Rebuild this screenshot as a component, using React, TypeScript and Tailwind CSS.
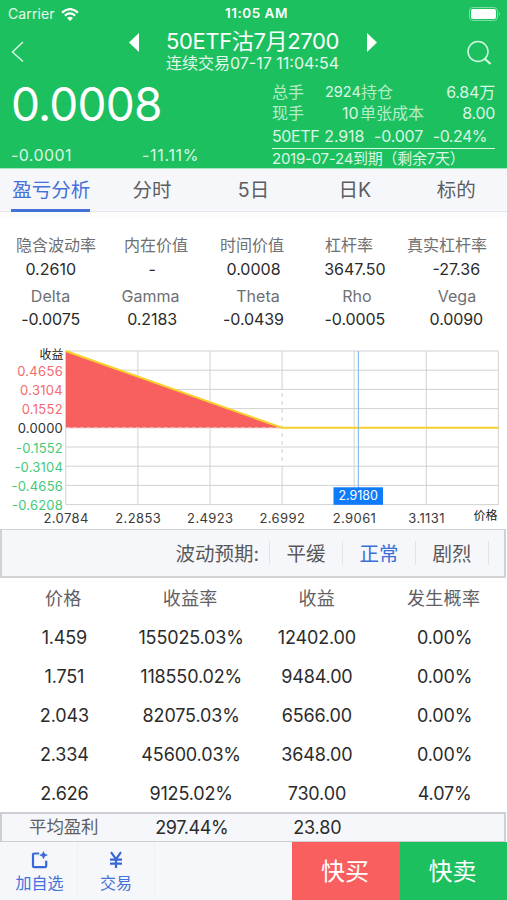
import type { ReactNode } from "react";

type Metric = {
  label: string;
  value: string;
};

const TABS = ["盈亏分析", "分时", "5日", "日K", "标的"];

const METRICS: Metric[] = [
  { label: "隐含波动率", value: "0.2610" },
  { label: "内在价值", value: "-" },
  { label: "时间价值", value: "0.0008" },
  { label: "杠杆率", value: "3647.50" },
  { label: "真实杠杆率", value: "-27.36" },
];

const GREEKS: Metric[] = [
  { label: "Delta", value: "-0.0075" },
  { label: "Gamma", value: "0.2183" },
  { label: "Theta", value: "-0.0439" },
  { label: "Rho", value: "-0.0005" },
  { label: "Vega", value: "0.0090" },
];

const Y_LABELS = [
  "0.4656",
  "0.3104",
  "0.1552",
  "0.0000",
  "-0.1552",
  "-0.3104",
  "-0.4656",
  "-0.6208",
];

const X_LABELS = ["2.0784", "2.2853", "2.4923", "2.6992", "2.9061", "3.1131"];

const ROWS = [
  ["1.459", "155025.03%", "12402.00", "0.00%"],
  ["1.751", "118550.02%", "9484.00", "0.00%"],
  ["2.043", "82075.03%", "6566.00", "0.00%"],
  ["2.334", "45600.03%", "3648.00", "0.00%"],
  ["2.626", "9125.02%", "730.00", "4.07%"],
];

export default function App() {
  return (
    <div className="flex h-[900px] w-[507px] flex-col overflow-hidden bg-white font-['Inter','Noto_Sans_CJK_SC',sans-serif] text-[#2b2b2b]">
      <QuoteHeader />
      <TabBar />
      <MetricGrid />
      <ProfitChart />
      <VolatilityBar />
      <ProfitTable />
      <BottomBar />
    </div>
  );
}

function QuoteHeader() {
  return (
    <header className="h-[169px] shrink-0 border-b border-[#a5e6bf] bg-[#1dc05f] text-white">
      <div className="grid h-7 grid-cols-3 items-center pr-1.5 pl-2 text-sm leading-none">
        <div className="flex items-center gap-1.5 text-[#e2f9eb]">
          <span className="tracking-[0.1px]">Carrier</span>
          <WifiIcon />
        </div>
        <span className="pl-1 text-center text-[13.5px] font-semibold tracking-[0.5px]">
          11:05 AM
        </span>
        <div className="flex justify-end">
          <BatteryIcon />
        </div>
      </div>

      <div className="flex h-12 items-start justify-between pr-[15px] pl-[11px]">
        <svg className="mt-[13px] h-[22px] w-3.5" viewBox="0 0 14 22" fill="none">
          <path d="M12 1 L1.5 11 L12 20.5" stroke="#d5f6e2" strokeWidth="1.5" />
        </svg>
        <div className="flex items-start pl-[14px]">
          <svg className="mt-[5px] h-[19px] w-2.5" viewBox="0 0 10 19">
            <path d="M10 0 V19 L0 9.5Z" fill="#fff" />
          </svg>
          <div className="flex w-[228px] flex-col items-center whitespace-nowrap">
            <h1 className="text-[22px] leading-[27px] tracking-[-0.35px]">
              50ETF沽7月2700
            </h1>
            <p className="text-base leading-4 text-[#e2f9eb]">
              连续交易07-17 11:04:54
            </p>
          </div>
          <svg className="mt-[5px] h-[19px] w-2.5" viewBox="0 0 10 19">
            <path d="M0 0 V19 L10 9.5Z" fill="#fff" />
          </svg>
        </div>
        <svg className="mt-3 h-[25px] w-[26px]" viewBox="0 0 26 25" fill="none">
          <circle cx="12" cy="11.5" r="10" stroke="#d5f6e2" strokeWidth="1.5" />
          <path d="M18.5 18.5 L24.5 24" stroke="#d5f6e2" strokeWidth="2.2" />
        </svg>
      </div>

      <div className="flex h-[92px] justify-between pr-3 pl-[11px]">
        <div className="w-[220px]">
          <div className="mt-1 text-[46px] leading-[48px] tracking-[-0.8px]">
            0.0008
          </div>
          <div className="mt-[17px] flex text-base leading-5 text-[#d9f7e5]">
            <span className="w-[131px] tracking-[0.4px]">-0.0001</span>
            <span className="tracking-[0.7px]">-11.11%</span>
          </div>
        </div>

        <div className="w-[223px] whitespace-nowrap text-[#d9f7e5]">
          <div className="mt-[5px] flex h-[21px] items-center text-base">
            <span className="w-[53px] text-[#b5edca]">总手</span>
            <span className="w-9 text-[14.5px]">2924</span>
            <span className="text-[#b5edca]">持仓</span>
            <span className="ml-auto tracking-[-0.2px]">6.84万</span>
          </div>
          <div className="flex h-[21px] items-center text-base">
            <span className="w-[70px] text-[#b5edca]">现手</span>
            <span className="w-[18px]">10</span>
            <span className="text-[#b5edca]">单张成本</span>
            <span className="ml-auto tracking-[-0.3px]">8.00</span>
          </div>
          <div className="flex h-[26px] items-center border-b-[1.5px] border-[#d9f7e5] pr-2 text-base">
            <span className="tracking-[-0.4px]">50ETF</span>
            <span className="ml-[5px] tracking-[-0.1px]">2.918</span>
            <span className="ml-auto tracking-[-0.2px]">-0.007</span>
            <span className="ml-auto tracking-[-0.5px]">-0.24%</span>
          </div>
          <p className="text-[15px] leading-5 tracking-[-0.25px]">
            2019-07-24到期（剩余7天）
          </p>
        </div>
      </div>
    </header>
  );
}

function TabBar() {
  return (
    <nav className="grid h-[43px] shrink-0 grid-cols-5 border-b border-[#e4e6e9] bg-[#f6f7fa] text-[19.5px] text-[#5b5e63]">
      {TABS.map((tab, index) => (
        <button
          key={tab}
          type="button"
          className={
            index === 0
              ? "mx-auto h-[43px] border-b-[3px] border-[#4471d8] pt-1 pl-px text-[#4471d8]"
              : "h-[43px] border-b-[3px] border-transparent pt-1"
          }
        >
          {tab}
        </button>
      ))}
    </nav>
  );
}

function MetricGrid() {
  return (
    <section className="h-32 shrink-0 border-t-[6px] border-[#fcfcfd] pt-[15px] text-center text-base leading-6 whitespace-nowrap">
      <div className="grid grid-cols-[112px_88px_104px_90px_106px] text-[#6f7073]">
        {METRICS.map((item) => (
          <span key={item.label}>{item.label}</span>
        ))}
      </div>
      <div className="grid grid-cols-5">
        {METRICS.map((item) => (
          <span key={item.label}>{item.value}</span>
        ))}
      </div>
      <div className="mt-[3px] grid grid-cols-[101px_99px_116px_82px_118px] text-[#6f7073]">
        {GREEKS.map((item) => (
          <span key={item.label}>{item.label}</span>
        ))}
      </div>
      <div className="-mt-px grid grid-cols-5">
        {GREEKS.map((item) => (
          <span key={item.label} className="tracking-[-0.1px]">
            {item.value}
          </span>
        ))}
      </div>
    </section>
  );
}

function ProfitChart() {
  const left = 65.8;
  const top = 11;
  const stepX = 72.1;
  const stepY = 19.2;
  const right = left + stepX * 6;
  const bottom = top + stepY * 8;
  const zero = top + stepY * 4;
  const strike = left + stepX * 3;

  return (
    <svg className="h-[189px] w-[507px] shrink-0" viewBox="0 0 507 189">
      {[0, 1, 2, 3, 4, 5, 6, 7, 8].map((i) => (
        <line
          key={i}
          x1={left}
          x2={right}
          y1={top + stepY * i}
          y2={top + stepY * i}
          stroke="#d2d2d2"
        />
      ))}
      {[0, 1, 2, 4, 5, 6].map((i) => (
        <line
          key={i}
          x1={left + stepX * i}
          x2={left + stepX * i}
          y1={top}
          y2={bottom}
          stroke="#d2d2d2"
        />
      ))}
      <path
        d={`M${strike} ${top} V49 M${strike} ${bottom} V126`}
        stroke="#d2d2d2"
      />
      <path
        d={`M${strike} 53 V124`}
        stroke="#cfcfcf"
        strokeDasharray="4 4"
      />

      <path d={`M${left} ${top} L${strike} ${zero} H${left}Z`} fill="#f85f5f" />
      <path
        d={`M${left} ${zero} H${strike}`}
        stroke="#f3c5c5"
        strokeDasharray="4 3"
      />
      <path
        d={`M${left} ${top} L${strike} ${zero} H${right}`}
        fill="none"
        stroke="#f8d22c"
        strokeWidth="2"
      />

      <line x1="358.3" x2="358.3" y1={top} y2="148" stroke="#72aeea" />
      <rect x="333.5" y="147.3" width="49.5" height="17.5" fill="#0f7bfa" />
      <text
        x="358.2"
        y="160"
        textAnchor="middle"
        className="fill-white text-[12.5px]"
      >
        2.9180
      </text>

      <text x="63.5" y="19" textAnchor="end" className="fill-[#222] text-[12px]">
        收益
      </text>
      {Y_LABELS.map((label, i) => (
        <text
          key={label}
          x="63"
          y={35.8 + stepY * i}
          textAnchor="end"
          className={
            i < 3
              ? "fill-[#f46a6e] text-[13px] tracking-[0.3px]"
              : i === 3
                ? "fill-[#333] text-[13px] tracking-[0.2px]"
                : "fill-[#45c97b] text-[13px] tracking-[0.2px]"
          }
        >
          {label}
        </text>
      ))}
      {X_LABELS.map((label, i) => (
        <text
          key={label}
          x={left + stepX * i + 0.3}
          y="182.7"
          textAnchor="middle"
          className="fill-[#3a3a3a] text-[13px] tracking-[0.4px]"
        >
          {label}
        </text>
      ))}
      <text x="497.5" y="179.5" textAnchor="end" className="fill-[#222] text-[12px]">
        价格
      </text>
    </svg>
  );
}

function VolatilityBar() {
  return (
    <section className="mr-px flex h-[49px] shrink-0 items-center border-2 border-t-[1.5px] border-[#d0d2d6] bg-[#f6f7fa] text-[19.5px] text-[#58595c]">
      <span className="w-[267px] pt-[3px] pr-2.5 text-right">波动预期:</span>
      <VolatilityOption>平缓</VolatilityOption>
      <VolatilityOption active>正常</VolatilityOption>
      <VolatilityOption>剧烈</VolatilityOption>
      <span className="h-6 border-l border-[#e2e4e8]" />
    </section>
  );
}

function VolatilityOption({
  active = false,
  children,
}: {
  active?: boolean;
  children: ReactNode;
}) {
  return (
    <button
      type="button"
      className={`flex h-6 w-[73px] items-center justify-center border-l border-[#e2e4e8] pt-1 ${
        active ? "text-[#3b6fd8]" : ""
      }`}
    >
      {children}
    </button>
  );
}

function ProfitTable() {
  return (
    <section className="shrink-0 text-center text-[18px] tracking-[-0.15px] whitespace-nowrap">
      <div className="grid h-10 grid-cols-4 items-center tracking-[0.3px] text-[#5f6063]">
        <span>价格</span>
        <span>收益率</span>
        <span>收益</span>
        <span>发生概率</span>
      </div>
      {ROWS.map(([price, rate, profit, chance]) => (
        <div key={price} className="grid h-[39px] grid-cols-4 items-center">
          <span className="pl-0.5">{price}</span>
          <span className="pl-0.5">{rate}</span>
          <span>{profit}</span>
          <span className="pl-0.5">{chance}</span>
        </div>
      ))}
      <div className="-mt-px mr-px grid h-[30px] grid-cols-4 items-center border-2 border-b border-[#cdcfd3] bg-[#f6f7fa]">
        <span className="pr-0.5 text-[17.5px] text-[#5f6063]">平均盈利</span>
        <span className="pl-[3px] tracking-[-0.4px]">297.44%</span>
        <span className="pl-[3px]">23.80</span>
      </div>
    </section>
  );
}

function BottomBar() {
  return (
    <footer className="flex h-[59px] shrink-0 bg-[#f6f7fa] text-base text-[#4471d8]">
      <button
        type="button"
        className="flex w-[78px] flex-col items-center border-r border-[#eef0f3] pt-[9px] pl-0.5"
      >
        <AddIcon />
        <span className="mt-1 leading-5">加自选</span>
      </button>
      <button
        type="button"
        className="flex w-[77px] flex-col items-center border-r border-[#eef0f3] pt-[9px]"
      >
        <YuanIcon />
        <span className="mt-1 leading-5">交易</span>
      </button>
      <button
        type="button"
        className="ml-auto w-[108px] bg-[#f95f5f] pr-0.5 text-2xl text-white"
      >
        快买
      </button>
      <button
        type="button"
        className="w-[107px] bg-[#1dc05f] pr-0.5 text-2xl text-white"
      >
        快卖
      </button>
    </footer>
  );
}

function WifiIcon() {
  return (
    <svg className="h-[13px] w-[18px]" viewBox="0 0 18 13" fill="none">
      <path d="M1 4.6 Q9 -2.4 17 4.6" stroke="#fff" strokeWidth="2.2" />
      <path d="M3.8 7.6 Q9 3.2 14.2 7.6" stroke="#fff" strokeWidth="2.1" />
      <path d="M6 9.9 Q9 7.4 12 9.9 L9 13Z" fill="#fff" />
    </svg>
  );
}

function BatteryIcon() {
  return (
    <svg className="h-[14px] w-8" viewBox="0 0 32 14" fill="none">
      <rect x="0.5" y="0.5" width="28" height="13" rx="3.5" stroke="#7edba3" />
      <rect x="2" y="2" width="25" height="10" rx="2" fill="#fff" />
      <path d="M30 4.8 Q32 7 30 9.2Z" fill="#7edba3" />
    </svg>
  );
}

function AddIcon() {
  return (
    <svg className="h-[18px] w-[18px]" viewBox="0 0 18 18" fill="none">
      <path
        d="M8.2 2.5 H3.2 Q2 2.5 2 3.7 V15 Q2 16.2 3.2 16.2 H14 Q15.2 16.2 15.2 15 V9.8"
        stroke="#3868d6"
        strokeWidth="2.2"
      />
      <path
        d="M12.5 0.6 L13.6 3 L16.3 4.1 L13.6 5.2 L12.5 7.8 L11.4 5.2 L8.8 4.1 L11.4 3Z"
        fill="#3868d6"
        stroke="#3868d6"
        strokeWidth="0.6"
      />
    </svg>
  );
}

function YuanIcon() {
  return (
    <svg className="h-[18px] w-[18px]" viewBox="0 0 18 18" fill="none">
      <path
        d="M4 1.2 L9 8.2 L14 1.2 M9 8 V17 M3 8.7 H15 M3 12.7 H15"
        stroke="#3868d6"
        strokeWidth="2.2"
      />
    </svg>
  );
}
